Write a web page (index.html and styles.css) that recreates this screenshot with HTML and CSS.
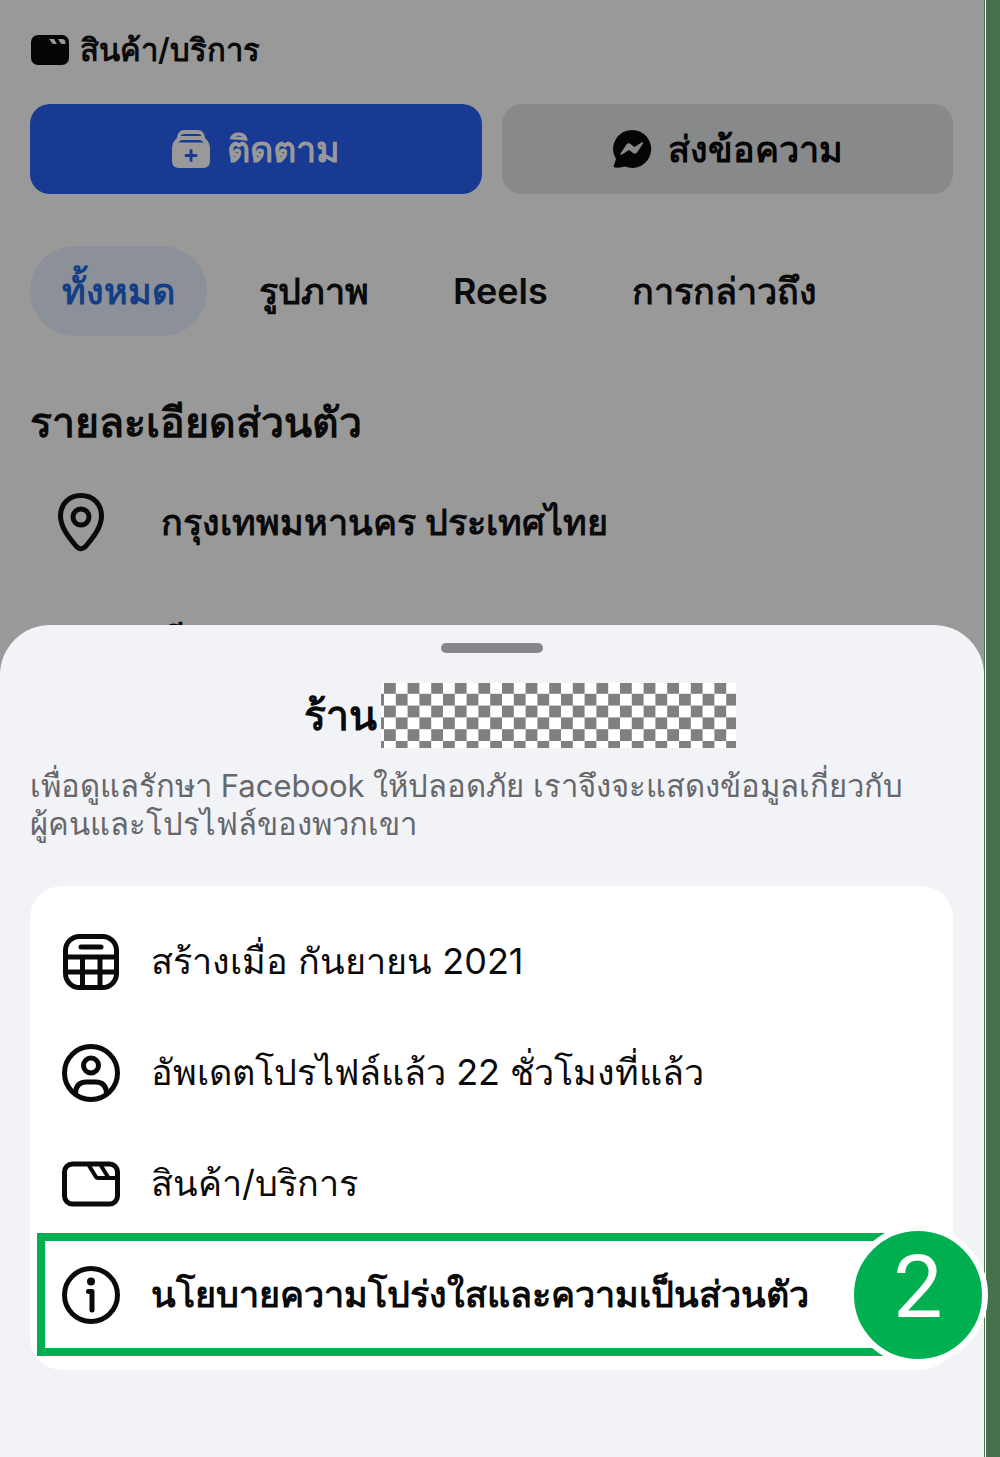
FILE: index.html
```html
<!DOCTYPE html>
<html lang="th">
<head>
    <meta charset="utf-8">
    <meta name="viewport" content="width=device-width, initial-scale=1">
    <title>สินค้า/บริการ</title>
    <link rel="stylesheet" href="styles.css">
</head>

<body>
<div class="frame">
<div class="screen">

    <!-- dimmed profile page -->
    <main class="profile">
        <div class="category">
            <svg width="40" height="32" viewBox="0 0 40 32">
                <rect x="1" y="1" width="38" height="30" rx="7" fill="#050505"/>
                <path d="M19 5h5l3 5h-3.500q-1 0-1.500-1zM28 5h4q4 0 3.500 5h-3.500q-1 0-1.500-1z" fill="#999"/>
            </svg>
            <span>สินค้า/บริการ</span>
        </div>

        <div class="actions">
            <button type="button" class="btn btn-follow">
                <svg width="40" height="40" viewBox="0 0 40 40">
                    <path d="M6 9Q7 1 13 1h14q6 0 7 8 5 4 5 11v12q0 7-7 7H8q-7 0-7-7V20Q1 13 6 9z" fill="#999"/>
                    <path d="M9.500 7q1-2 3.500-2h14q2.500 0 3.500 2zM7.500 13.500q1-2.500 4-2.500h17q3 0 4 2.500z" fill="#193a93"/>
                    <path d="M20 21.500v10M15 26.500h10" stroke="#193a93" stroke-width="3" stroke-linecap="round"/>
                </svg>
                <span>ติดตาม</span>
            </button>
            <button type="button" class="btn btn-message">
                <svg width="40" height="40" viewBox="0 0 40 40">
                    <path d="M20 1a19 19 0 1 1-7 36.600Q8 39 3 38.500 1 38 2 36l2-6A19 19 0 0 1 20 1z" fill="#050505"/>
                    <path d="M8.500 24.500l6-9q1.500-2 4-.5l4 3 7-4.500q2.500-1 1.500 1l-6 9q-1.500 2-4 .5l-4-3-7 4.500q-2.500 1-1.500-1z" fill="#88898b"/>
                </svg>
                <span>ส่งข้อความ</span>
            </button>
        </div>

        <nav class="tabs">
            <a href="#" class="tab tab-active">ทั้งหมด</a>
            <a href="#" class="tab">รูปภาพ</a>
            <a href="#" class="tab">Reels</a>
            <a href="#" class="tab">การกล่าวถึง</a>
        </nav>

        <h2 class="heading">รายละเอียดส่วนตัว</h2>
        <div class="detail">
            <svg width="48" height="60" viewBox="0 0 48 60" fill="none" stroke="#0a0a0a" stroke-width="5">
                <path d="M24 3.500C12 3.500 3.500 12 3.500 24c0 11 8 21 15.500 30q5 5.500 10 0C36.500 45 44.500 35 44.500 24 44.500 12 36 3.500 24 3.500z"/>
                <circle cx="24" cy="25" r="8"/>
            </svg>
            <span>กรุงเทพมหานคร ประเทศไทย</span>
        </div>
        <div class="detail detail-next">
            <span>มี</span>
        </div>
    </main>

    <!-- bottom sheet -->
    <section class="sheet">
        <div class="handle"></div>
        <h1 class="title">
            <span>ร้าน</span>
            <svg width="355" height="65" viewBox="0 0 355 65">
                <defs>
                    <pattern id="checks" x="3" y="-1" width="23.600" height="23.600" patternUnits="userSpaceOnUse">
                        <path d="M0 0h11.800v11.800H0zM11.800 11.800h11.800v11.800H11.800z" fill="#808080"/>
                    </pattern>
                </defs>
                <rect width="355" height="65" fill="#fff"/>
                <rect width="355" height="65" fill="url(#checks)"/>
            </svg>
        </h1>
        <p class="about">เพื่อดูแลรักษา Facebook ให้ปลอดภัย เราจึงจะแสดงข้อมูลเกี่ยวกับ<br>ผู้คนและโปรไฟล์ของพวกเขา</p>

        <ul class="card">
            <li class="row">
                <svg class="icon" viewBox="0 0 60 60">
                    <rect x="4.500" y="4.500" width="51" height="51" rx="14"/>
                    <path d="M20 15h20" stroke-linecap="round"/>
                    <path d="M4 25h52M4 40h52M21.500 25v31M39 25v31"/>
                </svg>
                <span>สร้างเมื่อ กันยายน 2021</span>
            </li>
            <li class="row">
                <svg class="icon" viewBox="0 0 60 60">
                    <circle cx="30" cy="30" r="26.500"/>
                    <circle cx="30" cy="22.500" r="7.500"/>
                    <path d="M14.500 51c0-8 4-12 11-12h9c7 0 11 4 11 12"/>
                </svg>
                <span>อัพเดตโปรไฟล์แล้ว 22 ชั่วโมงที่แล้ว</span>
            </li>
            <li class="row">
                <svg class="icon" viewBox="0 0 60 60">
                    <rect x="3.500" y="10" width="53" height="40" rx="8"/>
                    <path d="M27 10l8 13q.5 1 2 1H56M39 10l8 13" stroke-width="4"/>
                </svg>
                <span>สินค้า/บริการ</span>
            </li>
            <li class="policy">
                <a href="#" class="policy-link">
                    <svg class="icon" viewBox="0 0 60 60">
                        <circle cx="30" cy="30" r="26.500"/>
                        <circle cx="30" cy="16.500" r="4" fill="#0a0a0a" stroke="none"/>
                        <path d="M27.500 26.500h3.500V45" stroke-linecap="round" stroke-linejoin="round"/>
                    </svg>
                    <span>นโยบายความโปร่งใสและความเป็นส่วนตัว</span>
                </a>
                <span class="step">2</span>
            </li>
        </ul>
    </section>

</div>
</div>
</body>
</html>
```
FILE: styles.css
```css
* {
    box-sizing: border-box;
}

body {
    margin: 0;
    background: #47714c;
    color: #0a0a0a;
    font-family: Inter, "Noto Sans", sans-serif;
}

svg {
    display: block;
    flex: none;
}

/* thin white line at the right of the screen */
.frame {
    margin-right: 14px;
    padding-right: 1px;
    background: #fff;
}

.screen {
    display: flex;
    flex-direction: column;
    min-height: 100vh;
    border-right: 1px solid #47714c;
    background: #999;
}

.profile {
    padding: 28px 31px 0 30px;
}

.category {
    display: flex;
    align-items: center;
    gap: 10px;
    height: 44px;
    font-size: 31px;
    font-weight: 600;
}

.actions {
    display: grid;
    grid-template-columns: 1fr 1fr;
    gap: 20px;
    margin-top: 32px;
}

.btn {
    display: flex;
    align-items: center;
    justify-content: center;
    gap: 16px;
    height: 90px;
    padding: 0;
    border: 0;
    border-radius: 20px;
    font-family: inherit;
    font-size: 36px;
    font-weight: 600;
}

.btn-follow {
    background: #193a93;
    color: #999;
}

.btn-message {
    background: #88898b;
    color: #050505;
}

.tabs {
    display: flex;
    gap: 20px;
    margin-top: 52px;
}

.tab {
    padding: 0 32px;
    border-radius: 45px;
    color: #0a0a0a;
    font-size: 36px;
    font-weight: 600;
    line-height: 90px;
    text-decoration: none;
}

.tab-active {
    background: #8c9099;
    color: #143f85;
}

.heading {
    margin: 56px 0 0;
    font-size: 41px;
    font-weight: 600;
    line-height: 60px;
}

.detail {
    display: flex;
    align-items: center;
    gap: 56px;
    height: 60px;
    margin-top: 40px;
    padding-left: 27px;
    font-size: 36px;
    font-weight: 600;
}

.detail-next {
    margin-top: 58px;
    padding-left: 131px;
}

.sheet {
    position: relative;
    flex: 1;
    margin-top: -45px;
    padding: 18px 31px 87px 30px;
    border-radius: 50px 50px 0 0;
    background: #f2f3f7;
}

.handle {
    width: 102px;
    height: 10px;
    margin: 0 auto;
    border-radius: 5px;
    background: #85868a;
}

.title {
    display: flex;
    justify-content: center;
    align-items: center;
    gap: 4px;
    margin: 30px 0 0;
    padding-left: 56px;
    font-size: 41px;
    font-weight: 600;
    line-height: 65px;
}

.about {
    margin: 19px 0 0;
    color: #65676b;
    font-size: 31px;
    line-height: 38px;
}

.card {
    margin: 43px 0 0;
    padding: 20px 0;
    border-radius: 32px;
    background: #fff;
    font-size: 36px;
    list-style: none;
}

.row {
    display: flex;
    align-items: center;
    gap: 30px;
    height: 111px;
    padding-left: 31px;
}

.icon {
    width: 60px;
    height: 60px;
    fill: none;
    stroke: #0a0a0a;
    stroke-width: 5;
}

/* green marker round the last row */
.policy {
    position: relative;
    margin: -6px 35px -6px 7px;
    border: 8px solid #00b050;
}

.policy-link {
    display: flex;
    align-items: center;
    gap: 30px;
    height: 107px;
    padding-left: 16px;
    color: #0a0a0a;
    font-weight: 600;
    text-decoration: none;
}

.step {
    position: absolute;
    top: -16px;
    right: -78px;
    width: 140px;
    height: 140px;
    border: 6px solid #fff;
    border-radius: 50%;
    background: #00b050;
    color: #fff;
    font-family: Roboto, sans-serif;
    font-size: 88px;
    line-height: 112px;
    text-align: center;
}
```
